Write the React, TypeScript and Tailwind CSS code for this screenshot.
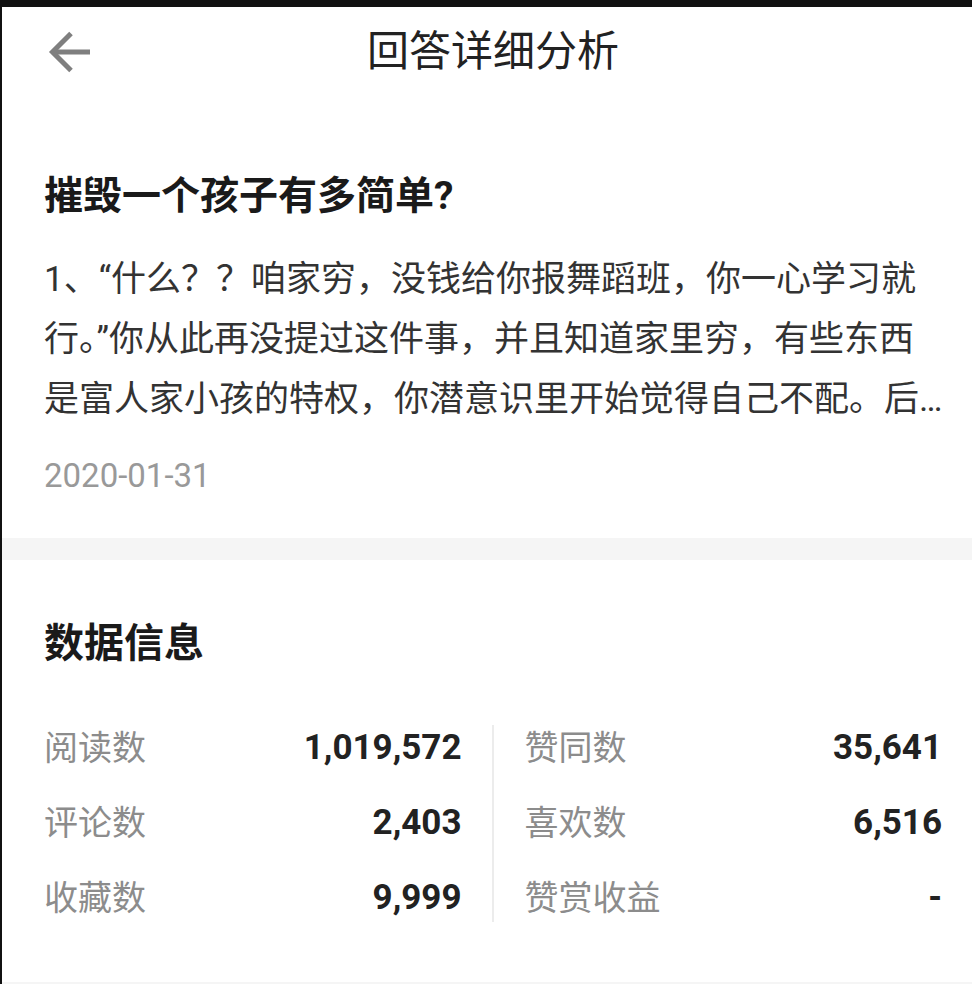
const stats = [
  [
    { label: "阅读数", value: "1,019,572" },
    { label: "评论数", value: "2,403" },
    { label: "收藏数", value: "9,999" },
  ],
  [
    { label: "赞同数", value: "35,641" },
    { label: "喜欢数", value: "6,516" },
    { label: "赞赏收益", value: "-" },
  ],
]

const excerpt = [
  "1、“什么？？咱家穷，没钱给你报舞蹈班，你一心学习就",
  "行。”你从此再没提过这件事，并且知道家里穷，有些东西",
  "是富人家小孩的特权，你潜意识里开始觉得自己不配。后…",
]

function BackArrow() {
  return (
    <svg viewBox="0 0 42 42" className="ml-[4px] h-[42px] w-[42px]" fill="none" stroke="#7f7f7f" strokeWidth={5}>
      <path d="M42 21H4" />
      <path d="M23 2.5L4.5 21L23 39.5" strokeLinejoin="miter" />
    </svg>
  )
}

export default function App() {
  return (
    <div className="min-h-screen w-full bg-white font-['Roboto','Noto_Sans_CJK_SC',sans-serif]">
      <div className="h-[7px] bg-[#111]" />
      <div className="border-l-2 border-[#111] min-h-[977px]">
        <header className="grid h-[90px] grid-cols-[1fr_auto_1fr] items-center pl-[42px] pr-[30px]">
          <BackArrow />
          <h1 className="text-[42px] leading-none text-[#222]">回答详细分析</h1>
          <div />
        </header>

        <section className="pl-[42px] pr-[30px] pt-[75px] pb-[42px]">
          <h2 className="text-[39px] font-bold leading-[49px] text-[#1a1a1a]">摧毁一个孩子有多简单?</h2>
          <div className="mt-[29px] text-[35px] leading-[60px] text-[#333]">
            {excerpt.map((line) => (
              <div key={line} className="whitespace-nowrap">{line}</div>
            ))}
          </div>
          <p className="mt-[26px] text-[33px] leading-[40px] text-[#999]">2020-01-31</p>
        </section>

        <div className="h-[22px] bg-[#f5f5f5]" />

        <section className="pl-[42px] pr-[30px] pt-[59px] pb-[46px]">
          <h3 className="text-[40px] font-bold leading-[50px] text-[#1a1a1a]">数据信息</h3>
          <div className="mt-[42px] flex">
            {stats.map((col, i) => (
              <div key={i} className="contents">
                {i === 1 && <div className="my-[14px] w-[2px] bg-[#ececec]" />}
                <div className={i === 0 ? "flex-1 pr-[30px]" : "flex-1 pl-[31px]"}>
                  {col.map((s) => (
                    <div key={s.label} className="flex h-[75px] items-center justify-between">
                      <span className="text-[34px] text-[#8c8c8c]">{s.label}</span>
                      <span className="text-[35px] font-bold text-[#222]">{s.value}</span>
                    </div>
                  ))}
                </div>
              </div>
            ))}
          </div>
        </section>

        <div className="h-[10px] bg-[#f5f5f5]" />
      </div>
    </div>
  )
}
